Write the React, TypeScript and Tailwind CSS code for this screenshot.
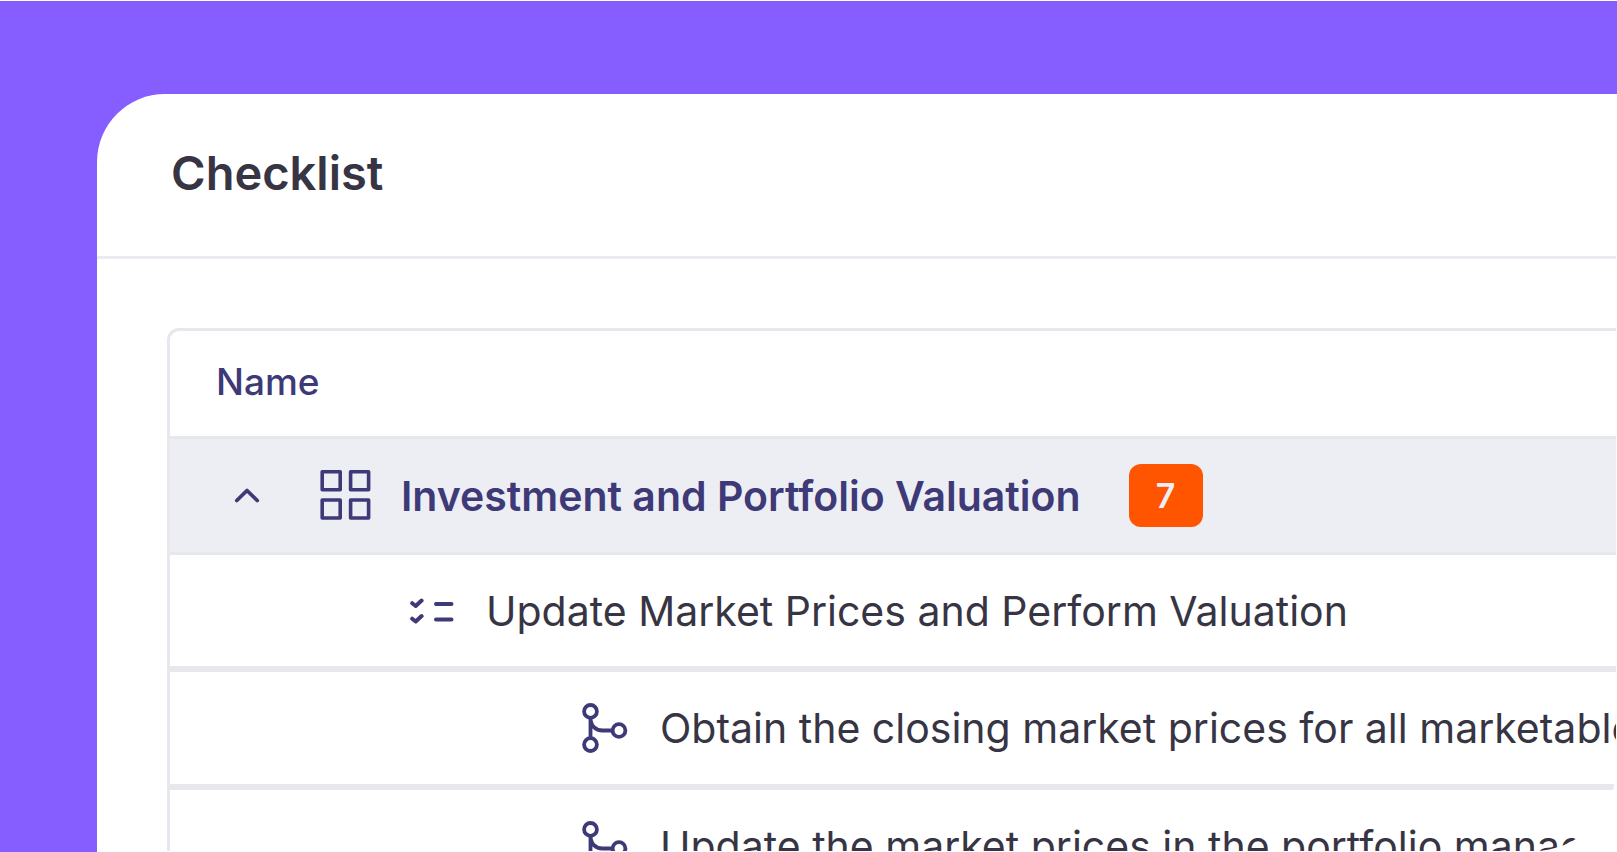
import { useState } from 'react';

const steps = [
  'Obtain the closing market prices for all marketable securities',
  'Update the market prices in the portfolio management system',
];

function GridIcon() {
  return (
    <svg className="w-[51px] h-[51px] shrink-0" viewBox="0 0 51 51" fill="none" stroke="currentColor" strokeWidth="3.6" strokeLinejoin="round" aria-hidden="true">
      <path d="M2.200 1.800h18v18h-18zM30.600 1.800h18v18h-18zM2.200 30h18v18h-18zM30.600 30h18v18h-18z" />
    </svg>
  );
}

function ChecksIcon() {
  return (
    <svg className="w-[44px] h-[26px] shrink-0" viewBox="0 0 44 26" fill="none" stroke="currentColor" strokeWidth="4" strokeLinecap="round" strokeLinejoin="round" aria-hidden="true">
      <path d="M2.200 5.200l3.500 2.800 5.900-5.400M2.200 20.700l3.500 2.800 5.900-5.400M26 6h15.500M26 21.500h15.500" />
    </svg>
  );
}

function BranchIcon() {
  return (
    <svg className="w-[46px] h-[50px] shrink-0" viewBox="0 0 46 50" fill="none" stroke="currentColor" strokeWidth="3.8" aria-hidden="true">
      <circle cx="8.500" cy="8.400" r="6.400" />
      <circle cx="8.500" cy="41.600" r="6.400" />
      <circle cx="37" cy="27.500" r="6.400" />
      <path d="M8.500 15v20.500M8.500 15c0 7.500 5 12.500 12 12.500h10" />
    </svg>
  );
}

export default function App() {
  const [open, setOpen] = useState(true);

  return (
    <div className="h-screen overflow-hidden border-t border-white bg-[#865dff] pt-[93px] pl-[97px] font-['Inter',sans-serif] text-[#373544]">
      <main className="h-full overflow-hidden rounded-tl-[68px] bg-white pr-px pb-px">
        <div className="h-full overflow-hidden rounded-br-[83px]">
          <header className="flex h-[165px] items-center border-b-3 border-[#ebebf1] pb-1 pl-[74px]">
            <h1 className="text-[47px] font-semibold">Checklist</h1>
          </header>

          <div className="pt-[69px] pl-[70px]">
            <table className="block w-full rounded-tl-xl border-t-3 border-l-3 border-[#e7e7ed]">
              <thead className="block">
                <tr className="block">
                  <th scope="col" className="flex h-[108px] items-center border-b-3 border-[#e7e7ed] pb-1 pl-[46px] text-[37px] font-medium text-[#3e3977]">
                    Name
                  </th>
                </tr>
              </thead>
              <tbody className="block whitespace-nowrap text-[41px]">
                <tr className="block">
                  <td className="flex h-[116px] items-center border-b-3 border-[#e7e7ed] bg-[#edeef4] pl-[59px] text-[#3e3977]">
                    <button type="button" aria-label="Toggle group" aria-expanded={open} onClick={() => setOpen(!open)} className="mr-[55px] flex h-10 w-9 items-center justify-center">
                      <svg className="h-[18px] w-[28px]" viewBox="0 0 28 18" fill="none" stroke="currentColor" strokeWidth="3.8" strokeLinecap="round" strokeLinejoin="round" aria-hidden="true">
                        <path d={open ? 'M3.800 13.500L14 3.500l10.200 10' : 'M3.800 3.500l10.200 10 10.200-10'} />
                      </svg>
                    </button>
                    <GridIcon />
                    <span className="ml-[30px] pt-0.5 font-semibold">Investment and Portfolio Valuation</span>
                    <span className="ml-12 flex h-[63px] w-[74px] items-center justify-center rounded-xl bg-[#ff5500] text-[34px] font-semibold text-[#edeef4]">7</span>
                  </td>
                </tr>
                {open && (
                  <>
                    <tr className="block">
                      <td className="flex h-[117px] items-center gap-8 border-b-6 border-[#e7e7ed] pl-[240px]">
                        <span className="text-[#3e3977]">
                          <ChecksIcon />
                        </span>
                        <span className="pt-0.5">Update Market Prices and Perform Valuation</span>
                      </td>
                    </tr>
                    {steps.map((step) => (
                      <tr key={step} className="block">
                        <td className="flex h-[118px] items-center gap-8 border-b-6 border-[#e7e7ed] pl-[412px]">
                          <span className="text-[#3e3977]">
                            <BranchIcon />
                          </span>
                          <span className="pt-0.5">{step}</span>
                        </td>
                      </tr>
                    ))}
                  </>
                )}
              </tbody>
            </table>
          </div>
        </div>
      </main>
    </div>
  );
}
